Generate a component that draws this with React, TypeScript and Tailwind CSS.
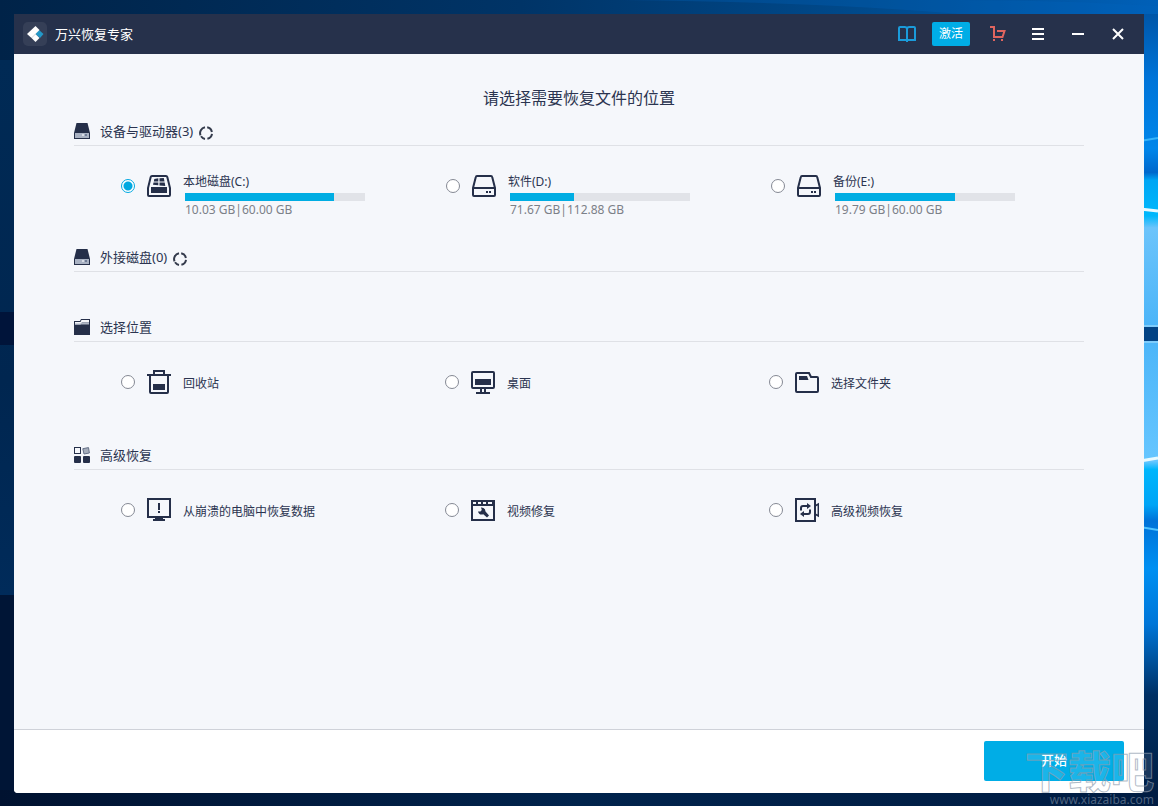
import type { ReactNode } from 'react';

const NAVY = '#252f49';

const Wallpaper = () => (
  <svg className="absolute inset-0 h-full w-full" viewBox="0 0 1158 806" preserveAspectRatio="none" aria-hidden="true">
    <defs>
      <linearGradient id="top" x1="0" x2="1" y1="0" y2="0">
        <stop offset="0" stopColor="#002348" />
        <stop offset="0.45" stopColor="#003467" />
        <stop offset="0.75" stopColor="#004a8c" />
        <stop offset="1" stopColor="#0060b8" />
      </linearGradient>
      <linearGradient id="left" x1="0" x2="0" y1="0" y2="1">
        <stop offset="0" stopColor="#002a55" />
        <stop offset="0.6" stopColor="#002650" />
        <stop offset="1" stopColor="#002b5a" />
      </linearGradient>
      <linearGradient id="right" x1="0" x2="0" y1="0" y2="1">
        <stop offset="0" stopColor="#0056a8" />
        <stop offset="0.08" stopColor="#0074d8" />
        <stop offset="0.17" stopColor="#0086ea" />
        <stop offset="0.2" stopColor="#0068cc" />
        <stop offset="0.21" stopColor="#00a6f4" />
        <stop offset="0.255" stopColor="#00b8fc" />
        <stop offset="0.27" stopColor="#6cc4fb" />
        <stop offset="0.4" stopColor="#4ab4f8" />
        <stop offset="0.565" stopColor="#66c6ff" />
        <stop offset="0.575" stopColor="#00b6fc" />
        <stop offset="0.62" stopColor="#00a4f6" />
        <stop offset="0.64" stopColor="#0072d8" />
        <stop offset="0.7" stopColor="#0090f2" />
        <stop offset="0.77" stopColor="#0076d8" />
        <stop offset="0.86" stopColor="#003064" />
        <stop offset="1" stopColor="#001c40" />
      </linearGradient>
      <linearGradient id="bottom" x1="0" x2="1" y1="0" y2="0">
        <stop offset="0" stopColor="#001230" />
        <stop offset="0.5" stopColor="#00234c" />
        <stop offset="1" stopColor="#001c42" />
      </linearGradient>
    </defs>
    <rect width="1158" height="806" fill="url(#top)" />
    <path d="M620 0 Q820 2 960 14 H1158 V6 Q1060 0 960 0Z" fill="#0064bc" opacity=".3" />
    <rect y="60" width="40" height="535" fill="url(#left)" />
    <rect y="312" width="40" height="33" fill="#00143a" />
    <rect y="595" width="40" height="211" fill="#001536" />
    <rect x="1110" y="14" width="48" height="792" fill="url(#right)" />
    <path d="M1140 141 L1158 138" stroke="#36b4fa" strokeWidth="2" />
    <path d="M1140 209 L1158 211 M1140 461 L1158 458" stroke="#e8faff" strokeWidth="3" />
    <path d="M1140 527 L1158 530" stroke="#50c4ff" strokeWidth="2" />
    <rect x="1140" y="325" width="18" height="18" fill="#7fccfb" />
    <rect x="1140" y="327" width="18" height="14" fill="#034384" />
    <rect y="790" width="1158" height="16" fill="url(#bottom)" />
  </svg>
);

const Logo = () => (
  <svg className="size-6" viewBox="0 0 24 24" aria-hidden="true">
    <rect width="24" height="24" rx="5" fill="#353f57" />
    <path d="M16 8 L20.500 12 L17 16 L12.500 12Z" fill="#2398c8" />
    <path d="M12.500 4 L16.500 8 L8.500 16 L4 12Z" fill="#fff" />
    <path d="M12.500 12 L16.500 16 L12.500 20 L8.500 16Z" fill="#fff" />
  </svg>
);

const BookIcon = () => (
  <svg width="18" height="16" viewBox="0 0 18 16" fill="none" stroke="#1a9bdb" strokeWidth="2" aria-hidden="true">
    <path d="M9 14 H1 V2 Q1 1 2 1 H6.500 Q9 1 9 3 Q9 1 11.500 1 H16 Q17 1 17 2 V14 H9Z M9 3 V16" />
  </svg>
);

const CartIcon = () => (
  <svg width="16" height="16" viewBox="0 0 16 16" aria-hidden="true">
    <path d="M0 1 H4 V11 H12.500 L14.500 5 H7" fill="none" stroke="#e0655f" strokeWidth="2" />
    <path d="M3 13 h2 v2 h-2z M11 13 h2 v2 h-2z" fill="#e0655f" />
  </svg>
);

const MenuIcon = () => (
  <svg width="12" height="12" viewBox="0 0 12 12" fill="#fff" aria-hidden="true">
    <path d="M0 0h12v2H0z M0 5h12v2H0z M0 10h12v2H0z" />
  </svg>
);

const MinimizeIcon = () => (
  <svg width="12" height="12" viewBox="0 0 12 12" fill="#fff" aria-hidden="true">
    <path d="M0 5h12v2H0z" />
  </svg>
);

const CloseIcon = () => (
  <svg width="12" height="12" viewBox="0 0 12 12" stroke="#fff" strokeWidth="2" aria-hidden="true">
    <path d="M1 1 L11 11 M11 1 L1 11" />
  </svg>
);

const DriveSmall = () => (
  <svg className="size-4" viewBox="0 0 16 16" aria-hidden="true">
    <path d="M2.500 0 H13.500 L16 10 V16 H0 V10Z" fill={NAVY} />
    <path d="M1 10 H15 V15 H1Z" fill="#a9b2c3" />
    <path d="M8 11 H10 V13 H8Z" fill="#d9dee7" />
    <path d="M11 11 H13 V13 H11Z" fill="#6f7c96" />
  </svg>
);

const FolderSmall = () => (
  <svg className="size-4" viewBox="0 0 16 16" aria-hidden="true">
    <path d="M0 2 H6 L7 0 H16 V16 H0Z" fill={NAVY} />
    <path d="M1 3 H6.500 L7.500 1 H15 V3.500 H8 L6.500 5.500 H1Z" fill="#f5f7fb" />
    <path d="M7.500 3.500 H15 V5.500 H1 V4.500 H6.500Z" fill="#aeb6c5" />
  </svg>
);

const TilesSmall = () => (
  <svg className="size-4" viewBox="0 0 16 16" aria-hidden="true">
    <rect x=".5" y=".5" width="6" height="6" fill="none" stroke={NAVY} />
    <path d="M8.800 1.700 L14.500 .6 L15.400 6 L10 7Z" fill="#a5adbb" stroke="#657087" />
    <rect y="9" width="7" height="7" rx="1" fill={NAVY} />
    <rect x="9" y="9" width="7" height="7" rx="1" fill={NAVY} />
  </svg>
);

const RefreshIcon = () => (
  <svg width="14" height="14" viewBox="0 0 14 14" fill="none" stroke="#343b4c" strokeWidth="2" aria-hidden="true">
    <path d="M8.200 1.200 A6 6 0 0 1 12.900 6 M13 7.800 A6 6 0 0 1 8.400 12.800 M6 12.900 A6 6 0 0 1 2 10.300 M1.500 9.300 A6 6 0 0 1 6 1.200" />
  </svg>
);

const Icon24 = ({ children }: { children: ReactNode }) => (
  <svg className="size-6 shrink-0" viewBox="0 0 24 24" fill="none" stroke={NAVY} strokeWidth="2" aria-hidden="true">
    {children}
  </svg>
);

const SystemDriveIcon = () => (
  <Icon24>
    <path d="M5 2 H19 Q20 2 20.300 3 L23 14 V21 Q23 22 22 22 H2 Q1 22 1 21 V14 L3.700 3 Q4 2 5 2Z" />
    <path d="M4 13 H20 V19 H4Z" fill={NAVY} stroke="none" />
    <path d="M7.300 5 L11.300 4.300 V7.400 H6.800Z M12.500 4.200 L16.800 4 L17.500 7.400 H12.500Z M6.500 8.500 H11.300 V11.300 L6 10.800Z M12.500 8.500 H17.700 L18.300 12 L12.500 11.400Z" fill={NAVY} stroke="none" />
  </Icon24>
);

const DriveIcon = () => (
  <Icon24>
    <path d="M5 2 H19 Q20 2 20.200 3 L23 14 V21 Q23 22 22 22 H2 Q1 22 1 21 V14 L3.800 3 Q4 2 5 2Z M1 14 H23" />
    <path d="M14 17 h2 v2 h-2z M17 17 h2 v2 h-2z" fill={NAVY} stroke="none" />
  </Icon24>
);

const TrashIcon = () => (
  <Icon24>
    <path d="M0 5 H24 M7 5 V1 H17 V5 M3 5 V22 Q3 23 4 23 H20 Q21 23 21 22 V5" />
    <path d="M6 14 H18 V20 H6Z" fill={NAVY} stroke="none" />
  </Icon24>
);

const DesktopIcon = () => (
  <Icon24>
    <rect x="1" y="2" width="22" height="16" rx="1" />
    <path d="M4 9 H20 V15 H4Z" fill={NAVY} stroke="none" />
    <path d="M10 18 V22 M14 18 V22 M5 23 H19" />
  </Icon24>
);

const FolderIcon = () => (
  <Icon24>
    <path d="M1 4 Q1 3 2 3 H14 L16 7 H22 Q23 7 23 8 V21 Q23 22 22 22 H2 Q1 22 1 21Z" />
    <path d="M4 6 H12 L13.500 10 H4Z" fill={NAVY} stroke="none" />
  </Icon24>
);

const CrashIcon = () => (
  <Icon24>
    <path d="M1 1 H23 V19 H1Z M6 22 H18 M8 20.500 H16" />
    <path d="M11 5 H13 V12 H11Z M11 13 H13 V15 H11Z" fill={NAVY} stroke="none" />
  </Icon24>
);

const RepairIcon = () => (
  <Icon24>
    <path d="M0 2 H24 V23 H0Z M2 8 V21 H22 V8Z" fill={NAVY} fillRule="evenodd" stroke="none" />
    <path d="M2 4 h3 v2 h-3z M7 4 h3 v2 h-3z M12 4 h3 v2 h-3z M17 4 h4 v2 h-4z" fill="#f5f7fb" stroke="none" />
    <path d="M7 13.500 L9.500 13.500 L10.800 12 L10 9.500 Q14 9 14.500 13.500 L18 17.500 L16 19.500 L12.300 16.300 Q8 17.500 7 13.500Z" fill={NAVY} stroke="none" />
  </Icon24>
);

const VideoRecoveryIcon = () => (
  <Icon24>
    <path d="M1 1 H20 V23 H1Z" />
    <path d="M20 8 L23.300 6 V18 L20 16" strokeWidth="1.500" />
    <path d="M6 12.500 V10 Q6 8 8 8 H13 M15 11.500 V14 Q15 16 13 16 H8" />
    <path d="M12 5 L16 8 L12 11Z M9 13 L5 16 L9 19Z" fill={NAVY} stroke="none" />
  </Icon24>
);

const drives = [
  { id: 'c', name: '本地磁盘(C:)', size: '10.03 GB|60.00 GB', used: 83, icon: <SystemDriveIcon /> },
  { id: 'd', name: '软件(D:)', size: '71.67 GB|112.88 GB', used: 35.6, icon: <DriveIcon /> },
  { id: 'e', name: '备份(E:)', size: '19.79 GB|60.00 GB', used: 66.7, icon: <DriveIcon /> },
];

const places = [
  { id: 'recycle', name: '回收站', icon: <TrashIcon /> },
  { id: 'desktop', name: '桌面', icon: <DesktopIcon /> },
  { id: 'folder', name: '选择文件夹', icon: <FolderIcon /> },
];

const advanced = [
  { id: 'crash', name: '从崩溃的电脑中恢复数据', icon: <CrashIcon /> },
  { id: 'repair', name: '视频修复', icon: <RepairIcon /> },
  { id: 'video', name: '高级视频恢复', icon: <VideoRecoveryIcon /> },
];

const Radio = ({ id, checked }: { id: string; checked?: boolean }) => (
  <input
    type="radio"
    name="location"
    id={id}
    defaultChecked={checked}
    className="mt-[5px] size-[14px] shrink-0 appearance-none rounded-full border border-[#858994] bg-white checked:border-[#00a8e1] checked:bg-[radial-gradient(circle,#00a8e1_4px,#fff_5px)]"
  />
);

const SectionHeader = ({ icon, title, refresh }: { icon: ReactNode; title: string; refresh?: boolean }) => (
  <div className="flex h-[29px] items-center border-b border-[#dfe1e6]">
    {icon}
    <h2 className="ml-[10px] text-[13px] leading-5">{title}</h2>
    {refresh && (
      <button type="button" aria-label="刷新" className="ml-[6px] pt-1">
        <RefreshIcon />
      </button>
    )}
  </div>
);

const OptionRow = ({ items }: { items: typeof places }) => (
  <div className="grid grid-cols-3 gap-x-[9px] pt-7 pl-[47px]">
    {items.map((item) => (
      <div key={item.id} className="flex">
        <Radio id={item.id} />
        <label htmlFor={item.id} className="flex pl-3 text-xs leading-6">
          {item.icon}
          <span className="ml-3 pt-[2px] leading-6">{item.name}</span>
        </label>
      </div>
    ))}
  </div>
);

const TitleButton = ({ label, children }: { label: string; children: ReactNode }) => (
  <button type="button" aria-label={label} className="flex h-10 w-10 items-center justify-center">
    {children}
  </button>
);

const App = () => {
  return (
    <div className="relative flex min-h-screen flex-col overflow-hidden bg-[#00234c] px-[14px] pt-[14px] pb-[13px] font-['Noto_Sans','Noto_Sans_CJK_SC',sans-serif] text-[#2b3450]">
      <Wallpaper />

      <div className="relative flex flex-1 flex-col overflow-hidden rounded-b-sm bg-[#f5f7fb]">
        <header className="flex h-10 items-center bg-[#26314b] pr-[6px] pl-[9px]">
          <Logo />
          <h1 className="ml-2 text-[13px] leading-5 text-white">万兴恢复专家</h1>
          <div className="ml-auto flex items-center">
            <TitleButton label="指南"><BookIcon /></TitleButton>
            <button type="button" className="mr-2 ml-[5px] h-6 w-[38px] rounded-xs bg-[#00ade6] text-xs text-white">
              激活
            </button>
            <TitleButton label="购买"><CartIcon /></TitleButton>
            <TitleButton label="菜单"><MenuIcon /></TitleButton>
            <TitleButton label="最小化"><MinimizeIcon /></TitleButton>
            <TitleButton label="关闭"><CloseIcon /></TitleButton>
          </div>
        </header>

        <main className="flex-1 px-[60px] pt-8">
          <p className="mb-[7px] text-center text-base leading-6">请选择需要恢复文件的位置</p>

          <section className="pb-[25px]">
            <SectionHeader icon={<DriveSmall />} title="设备与驱动器(3)" refresh />
            <div className="grid grid-cols-3 gap-x-3 pt-7 pl-[47px]">
              {drives.map((drive) => (
                <div key={drive.id} className="flex">
                  <Radio id={drive.id} checked={drive.id === 'c'} />
                  <label htmlFor={drive.id} className="flex pl-3 text-xs">
                    {drive.icon}
                    <span className="ml-3 block leading-4">
                      <span className="block">{drive.name}</span>
                      <span className="mt-[3px] ml-[2px] block h-2 w-[180px] bg-[#e1e3e8]">
                        <span className="block h-full bg-[#00ade3]" style={{ width: `${drive.used}%` }} />
                      </span>
                      <span className="mt-px ml-[2px] block text-[#7c8088]">{drive.size}</span>
                    </span>
                  </label>
                </div>
              ))}
            </div>
          </section>

          <section className="pb-[41px]">
            <SectionHeader icon={<DriveSmall />} title="外接磁盘(0)" refresh />
          </section>

          <section className="pb-[45px]">
            <SectionHeader icon={<FolderSmall />} title="选择位置" />
            <OptionRow items={places} />
          </section>

          <section className="pb-11">
            <SectionHeader icon={<TilesSmall />} title="高级恢复" />
            <OptionRow items={advanced} />
          </section>
        </main>

        <footer className="flex h-16 items-start justify-end border-t border-[#cfd2d9] bg-white pt-[11px] pr-5">
          <button type="button" className="h-10 w-[140px] rounded-xs bg-[#00ade6] text-[13px] font-medium text-white">
            开始
          </button>
        </footer>
      </div>

      <div className="pointer-events-none absolute right-0 bottom-0 pr-1 text-right">
        <div className="text-[43px] leading-[44px] font-black text-white/10 [-webkit-text-stroke:1px_#8d9badb3]">下载吧</div>
        <div className="text-xs leading-3 text-[#8494a8]/60">www.xiazaiba.com</div>
      </div>
    </div>
  );
};

export default App;
